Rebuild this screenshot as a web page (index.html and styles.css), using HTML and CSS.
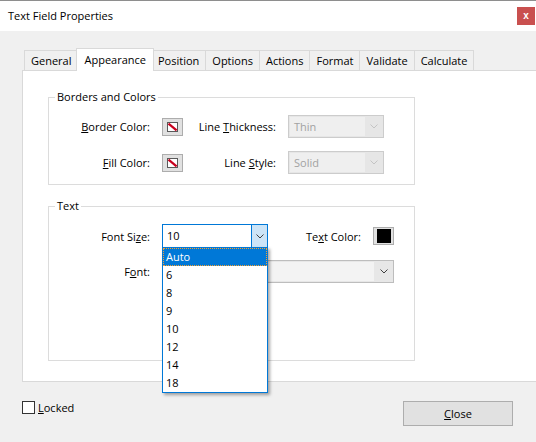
FILE: index.html
```html
<!DOCTYPE html>
<html>
<head>
<meta charset="utf-8">
<title>Text Field Properties</title>
<link rel="stylesheet" href="styles.css">
</head>
<body>
<div class="window">
  <div class="titlebar">
    <span class="title">Text Field Properties</span>
    <span class="close-x">x</span>
  </div>

  <div class="tabs">
    <div class="tab">General</div>
    <div class="tab active">Appearance</div>
    <div class="tab">Position</div>
    <div class="tab">Options</div>
    <div class="tab">Actions</div>
    <div class="tab">Format</div>
    <div class="tab">Validate</div>
    <div class="tab">Calculate</div>
  </div>

  <div class="panel">
    <fieldset class="group group-borders">
      <legend>Borders and Colors</legend>
      <div class="grid-borders">
        <span class="lbl"><u>B</u>order Color:</span>
        <span class="swatch">
          <svg width="11" height="10" viewBox="0 0 11 10"><rect x="0.5" y="0.5" width="10" height="9" fill="#fff" stroke="#5a5a5a"/><line x1="1.5" y1="1.6" x2="9.6" y2="8.4" stroke="#c8001e" stroke-width="2.2"/></svg>
        </span>
        <span class="lbl">Line <u>T</u>hickness:</span>
        <div class="combo disabled">
          <span class="combo-text">Thin</span>
          <span class="combo-btn"><svg width="8" height="5" viewBox="0 0 8 5"><polyline points="0.5,0.5 4,4 7.5,0.5" fill="none" stroke="#c4c4c4"/></svg></span>
        </div>

        <span class="lbl"><u>F</u>ill Color:</span>
        <span class="swatch">
          <svg width="11" height="10" viewBox="0 0 11 10"><rect x="0.5" y="0.5" width="10" height="9" fill="#fff" stroke="#5a5a5a"/><line x1="1.5" y1="1.6" x2="9.6" y2="8.4" stroke="#c8001e" stroke-width="2.2"/></svg>
        </span>
        <span class="lbl">Line <u>S</u>tyle:</span>
        <div class="combo disabled">
          <span class="combo-text">Solid</span>
          <span class="combo-btn"><svg width="8" height="5" viewBox="0 0 8 5"><polyline points="0.5,0.5 4,4 7.5,0.5" fill="none" stroke="#c4c4c4"/></svg></span>
        </div>
      </div>
    </fieldset>

    <fieldset class="group group-text">
      <legend>Text</legend>
      <div class="grid-text">
        <span class="lbl">Font Si<u>z</u>e:</span>
        <div class="combo focused">
          <span class="combo-text">10</span>
          <span class="combo-btn"><svg width="8" height="5" viewBox="0 0 8 5"><polyline points="0.5,0.5 4,4 7.5,0.5" fill="none" stroke="#404040"/></svg></span>
          <ul class="dropdown">
            <li class="sel">Auto</li>
            <li>6</li>
            <li>8</li>
            <li>9</li>
            <li>10</li>
            <li>12</li>
            <li>14</li>
            <li>18</li>
          </ul>
        </div>
        <span class="lbl">Te<u>x</u>t Color:</span>
        <span class="swatch swatch-color"><span class="swatch-fill"></span></span>

        <span class="lbl">F<u>o</u>nt:</span>
        <div class="combo font-combo">
          <span class="combo-text"></span>
          <span class="combo-btn"><svg width="8" height="5" viewBox="0 0 8 5"><polyline points="0.5,0.5 4,4 7.5,0.5" fill="none" stroke="#404040"/></svg></span>
        </div>
      </div>
    </fieldset>
  </div>

  <div class="footer">
    <label class="check"><span class="box"></span><span><u>L</u>ocked</span></label>
    <button class="btn"><u>C</u>lose</button>
  </div>
</div>
</body>
</html>
```

FILE: styles.css
```css
html, body {
  margin: 0;
  padding: 0;
}
body {
  background: #f0f0f0;
  font-family: "Open Sans", "Noto Sans", sans-serif;
  font-size: 11px;
  color: #000;
}
.window {
  width: 536px;
  height: 442px;
  overflow: hidden;
  background: #f0f0f0;
}
.titlebar {
  height: 30px;
  border-top: 1px solid #8e8e8e;
  background: #fff;
  display: flex;
  justify-content: space-between;
  align-items: flex-start;
}
.title {
  line-height: 30px;
  padding-left: 8px;
}
.close-x {
  margin-top: 6px;
  margin-right: 1px;
  width: 18px;
  height: 18px;
  background: #c9504f;
  color: #fff;
  font-family: "Liberation Sans", sans-serif;
  font-weight: bold;
  font-size: 10px;
  line-height: 17px;
  text-align: center;
}
.tabs {
  display: flex;
  align-items: flex-end;
  height: 22px;
  margin-top: 17px;
  padding-left: 24px;
}
.tab {
  height: 19px;
  line-height: 19px;
  padding: 0 6px;
  border: 1px solid #d9d9d9;
  border-bottom: none;
  margin-left: -1px;
  background: #f0f0f0;
  white-space: nowrap;
}
.tab:first-child {
  margin-left: 0;
}
.tab.active {
  height: 22px;
  line-height: 21px;
  margin: 0 -2px -1px -2px;
  padding: 0 7px;
  background: #fff;
  z-index: 2;
}
.panel {
  margin-left: 22px;
  width: 488px;
  border: 1px solid #d9d9d9;
  background: #fff;
  padding: 18px 0 20px 25px;
  display: flex;
  flex-direction: column;
  gap: 13px;
}
.group {
  margin: 0;
  padding: 0;
  width: 365px;
  border: 1px solid #dcdcdc;
  min-inline-size: 0;
}
.group legend {
  margin-left: 6px;
  padding: 0 2px;
  line-height: 16px;
}
.group-borders {
  padding-top: 10px;
  padding-bottom: 10px;
}
.group-text {
  padding-top: 10px;
  padding-bottom: 77px;
}
.lbl {
  text-align: right;
  white-space: nowrap;
  line-height: 15px;
}
.grid-borders {
  display: grid;
  grid-template-columns: 101px 21px 81px 96px;
  grid-template-rows: 23px 23px;
  column-gap: 12px;
  row-gap: 13px;
  align-items: center;
}
.grid-text {
  display: grid;
  grid-template-columns: 101px 106px 81px 21px;
  grid-template-rows: 24px 23px;
  column-gap: 12px;
  row-gap: 12px;
  align-items: center;
}
.swatch {
  width: 19px;
  height: 16px;
  border: 1px solid #adadad;
  background: #e1e1e1;
  display: flex;
  align-items: center;
  justify-content: center;
}
.swatch svg {
  display: block;
}
.swatch-fill {
  width: 14px;
  height: 14px;
  background: #000;
}
.combo {
  display: flex;
  box-sizing: border-box;
  height: 23px;
  border: 1px solid #cccccc;
  background: #e6e6e6;
}
.combo-text {
  flex: 1;
  padding-left: 4px;
  line-height: 19px;
}
.combo-btn {
  width: 18px;
  display: flex;
  align-items: center;
  justify-content: center;
}
.combo-btn svg {
  display: block;
}
.combo.disabled .combo-text {
  margin: 1px 0 1px 1px;
  background: #efefef;
  color: #a2a2a2;
  padding-left: 4px;
}
.combo.focused {
  position: relative;
  height: 24px;
  border-color: #0078d7;
  background: #fff;
}
.combo.focused .combo-text {
  line-height: 22px;
  padding-left: 4px;
}
.combo.focused .combo-btn {
  width: 15px;
  border-left: 1px solid #0078d7;
  background: #cce4f7;
}
.font-combo {
  grid-column: 2 / 5;
  border-color: #bdbdbd;
  background: #e7e7e7;
}
.font-combo .combo-text {
  margin: 1px 0 1px 1px;
  background: #f3f3f3;
}
.font-combo .combo-btn {
  width: 19px;
}
.dropdown {
  position: absolute;
  top: 100%;
  left: -1px;
  width: 104px;
  margin: 0;
  padding: 0;
  list-style: none;
  border: 1px solid #0078d7;
  background: #fff;
  box-shadow: 2px 2px 3px rgba(0, 0, 0, 0.35);
  z-index: 5;
}
.dropdown li {
  height: 18px;
  line-height: 18px;
  padding-left: 3px;
}
.dropdown li.sel {
  background: #0078d7;
  color: #fff;
  outline: 1px dotted #f5a030;
  outline-offset: -1px;
}
.footer {
  display: flex;
  justify-content: space-between;
  align-items: flex-start;
  padding: 19px 23px 0 22px;
}
.check {
  display: flex;
  align-items: center;
  gap: 3px;
  line-height: 13px;
}
.check .box {
  width: 11px;
  height: 11px;
  border: 1px solid #333;
  background: #fff;
}
.btn {
  width: 110px;
  height: 25px;
  border: 1px solid #adadad;
  background: #e1e1e1;
  font-family: "Open Sans", "Noto Sans", sans-serif;
  font-size: 11px;
  color: #000;
  padding: 0;
  margin: 0;
}
```
